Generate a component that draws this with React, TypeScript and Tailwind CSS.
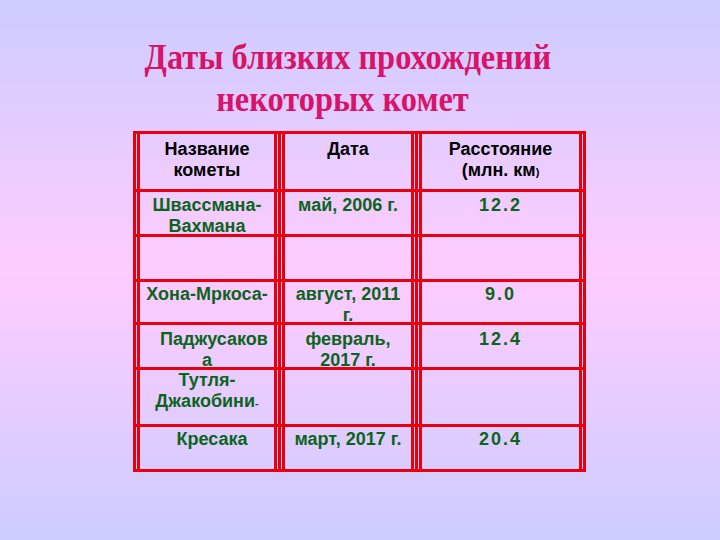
import React from "react";

const Divider = () => (
  <div className="w-[5px] shrink-0 flex justify-center">
    <div className="w-[3px] bg-[#e8000e]" />
  </div>
);

const Outer = ({ side }: { side: "l" | "r" }) => (
  <div className={side === "l" ? "flex shrink-0 w-[4px]" : "flex shrink-0 w-[4px] justify-end"}>
    <div className="w-[3px] bg-[#e8000e]" />
  </div>
);

type RowProps = {
  h: string;
  pt: string;
  cells: React.ReactNode[];
  header?: boolean;
};

const Row = ({ h, pt, cells, header }: RowProps) => {
  const color = header ? "text-black" : "text-[#0a641c]";
  const base = `shrink-0 border-x-[3px] border-[#e8000e] text-center text-[18px] leading-[21px] font-bold ${color} ${pt}`;
  return (
    <div className={`flex ${h} border-b-[3px] border-[#e8000e]`}>
      <Outer side="l" />
      <div className={`${base} w-[140px]`}>{cells[0]}</div>
      <Divider />
      <div className={`${base} w-[132px]`}>{cells[1]}</div>
      <Divider />
      <div className={`${base} w-[163px]`}>{cells[2]}</div>
      <Outer side="r" />
    </div>
  );
};

const Num = ({ children }: { children: React.ReactNode }) => (
  <span className="tracking-[2px]">{children}</span>
);

export default function App() {
  return (
    <div
      className="w-[720px] h-[540px] overflow-hidden bg-[linear-gradient(to_bottom,#ccccff_0%,#ffccff_50%,#ccccff_100%)]"
      style={{ fontFamily: '"Liberation Sans", Arial, sans-serif' }}
    >
      <div className="h-[131px] pt-[36px] pr-[24px] text-center">
        <h1
          className="inline-block scale-x-[0.9] text-[36px] leading-[42px] font-bold text-[#d8136a]"
          style={{ fontFamily: '"Liberation Serif", "Times New Roman", serif' }}
        >
          Даты близких прохождений
          <br />
          <span className="inline-block pr-[12px]">некоторых комет</span>
        </h1>
      </div>
      <div className="ml-[133px] w-[453px] border-t-[3px] border-[#e8000e]">
        <Row
          h="h-[58px]"
          pt="pt-[5px]"
          header
          cells={[
            <>Название<br />кометы</>,
            <>Дата</>,
            <>
              Расстояние
              <br />
              (млн. км<span className="text-[11px]">)</span>
            </>,
          ]}
        />
        <Row
          h="h-[45px]"
          pt="pt-[3px]"
          cells={[
            <>Швассмана-<br />Вахмана</>,
            <>май, 2006 г.</>,
            <Num>12.2</Num>,
          ]}
        />
        <Row h="h-[45px]" pt="pt-[3px]" cells={[<></>, <></>, <></>]} />
        <Row
          h="h-[43px]"
          pt="pt-[2px]"
          cells={[
            <span className="whitespace-nowrap">Хона-Мркоса-</span>,
            <>август, 2011<br />г.</>,
            <Num>9.0</Num>,
          ]}
        />
        <Row
          h="h-[45px]"
          pt="pt-[4px]"
          cells={[
            <>
              <span className="block pl-[14px]">Паджусаков</span>
              <span className="block">а</span>
            </>,
            <>февраль,<br />2017 г.</>,
            <Num>12.4</Num>,
          ]}
        />
        <Row
          h="h-[57px]"
          pt="pt-[0px]"
          cells={[
            <>
              Тутля-
              <br />
              Джакобини<span className="text-[11px]">-</span>
            </>,
            <></>,
            <></>,
          ]}
        />
        <Row
          h="h-[45px]"
          pt="pt-[2px]"
          cells={[
            <span className="block pl-[10px]">Кресака</span>,
            <>март, 2017 г.</>,
            <Num>20.4</Num>,
          ]}
        />
      </div>
    </div>
  );
}
